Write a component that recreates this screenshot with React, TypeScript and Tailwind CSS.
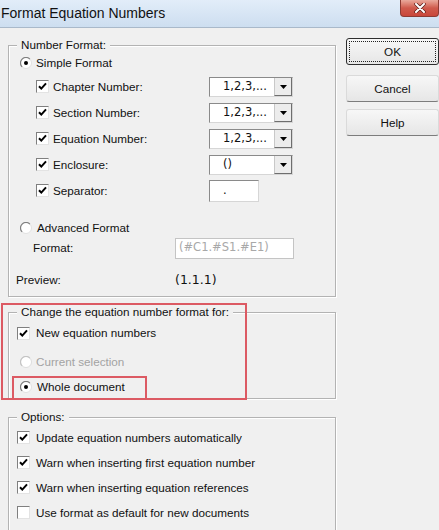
import React from "react";

const Check = ({ on = true }: { on?: boolean }) => (
  <span className="inline-flex w-[13px] h-[13px] shrink-0 bg-white border border-t-[#7f7f7f] border-l-[#7f7f7f] border-r-[#e3e3e3] border-b-[#e3e3e3] items-center justify-center">
    {on && (
      <svg width="11" height="11" viewBox="0 0 11 11">
        <path d="M2 5.2 L4.3 7.6 L9 2.4" fill="none" stroke="#000" strokeWidth="2" />
      </svg>
    )}
  </span>
);

const Radio = ({ on = false, disabled = false }: { on?: boolean; disabled?: boolean }) => (
  <svg width="12" height="12" viewBox="0 0 12 12" className="shrink-0">
    <circle cx="6" cy="6" r="5.5" fill="#fff" stroke={disabled ? "#dcdcdc" : "#e0e0e0"} />
    <path d="M9.9 2.1 A5.5 5.5 0 0 0 2.1 9.9" fill="none" stroke={disabled ? "#c4c4c4" : "#808080"} strokeWidth="1.2" />
    {on && <circle cx="6" cy="6" r="2" fill="#000" />}
  </svg>
);

const Combo = ({ value }: { value: string }) => (
  <div className="flex w-[84px] h-[20px] bg-white border border-t-[#8a8a8a] border-l-[#8a8a8a] border-r-[#d6d6d6] border-b-[#d6d6d6]">
    <div className="flex-1 flex items-center pl-[13px] font-['DejaVu_Sans',sans-serif] text-[11.5px]">{value}</div>
    <div className="w-[18px] flex items-center justify-center bg-[#ececec] border-l border-[#c8c8c8] border-r border-r-[#6e6e6e] border-b border-b-[#6e6e6e]">
      <svg width="7" height="4" viewBox="0 0 7 4">
        <path d="M0 0 H7 L3.5 4 Z" fill="#000" />
      </svg>
    </div>
  </div>
);

const Group = ({ title, className, children }: { title: string; className?: string; children: React.ReactNode }) => (
  <fieldset className={"w-[328px] border border-[#b3b3b3] shadow-[inset_1px_1px_0_#fff,1px_1px_0_#fff] " + (className || "")}>
    <legend className="ml-[8px] px-[4px] leading-[14px] bg-[#f0f0f0]">{title}</legend>
    {children}
  </fieldset>
);

const Button = ({ label, primary = false, className }: { label: string; primary?: boolean; className?: string }) => (
  <div
    className={
      "h-[27px] w-[93px] rounded-[3px] flex items-center justify-center bg-linear-to-b from-[#f7f7f7] to-[#e6e6e6] " +
      (primary
        ? "border border-[#2e2e2e] "
        : "border border-[#dadada] border-b-[#7c7c7c] ") +
      (className || "")
    }
  >
    {primary ? (
      <div className="w-[87px] h-[21px] border border-dotted border-[#222] flex items-center justify-center">{label}</div>
    ) : (
      label
    )}
  </div>
);

export default function App() {
  const checkRows = [
    { label: "Chapter Number:", value: "1,2,3,..." },
    { label: "Section Number:", value: "1,2,3,..." },
    { label: "Equation Number:", value: "1,2,3,..." },
    { label: "Enclosure:", value: "()" },
  ];

  const options = [
    { label: "Update equation numbers automatically", on: true },
    { label: "Warn when inserting first equation number", on: true },
    { label: "Warn when inserting equation references", on: true },
    { label: "Use format as default for new documents", on: false },
  ];

  return (
    <div className="relative w-[439px] h-[530px] overflow-hidden bg-[#f0f0f0] text-[#111] font-['Liberation_Sans',Arial,sans-serif] text-[11.7px]">
      {/* Title bar */}
      <div className="flex h-[28px] bg-linear-to-b from-[#e2edf9] to-[#cddef0] border-b border-[#a9b9ca]">
        <div className="flex items-center pl-[1px] text-[14px] text-[#111]">Format Equation Numbers</div>
        <div className="ml-auto w-[39px] h-[17px] rounded-b-[4px] border border-t-0 border-[#8d3b33] bg-linear-to-b from-[#e9a99c] via-[#cf5a4c] to-[#c9473a] flex items-center justify-center">
          <svg width="12" height="10" viewBox="0 0 12 10">
            <path d="M2 1 L10 9 M10 1 L2 9" stroke="#5a1e18" strokeWidth="3.4" strokeLinecap="round" />
            <path d="M2 1 L10 9 M10 1 L2 9" stroke="#fff" strokeWidth="2" strokeLinecap="round" />
          </svg>
        </div>
      </div>

      <div className="flex pl-[8px]">
        {/* Left column */}
        <div className="pt-[10px]">
          <Group title="Number Format:" className="pb-[6px]">
            <div className="flex items-center h-[22px] pl-[11px] gap-[4px]">
              <Radio on />
              <span>Simple Format</span>
            </div>
            {checkRows.map((r) => (
              <div key={r.label} className="flex items-center h-[26px] pl-[27px]">
                <div className="flex items-center gap-[4px] w-[173px]">
                  <Check />
                  <span>{r.label}</span>
                </div>
                <Combo value={r.value} />
              </div>
            ))}
            <div className="flex items-center h-[26px] pl-[27px]">
              <div className="flex items-center gap-[4px] w-[173px]">
                <Check />
                <span>Separator:</span>
              </div>
              <div className="w-[50px] h-[22px] bg-white border border-t-[#8a8a8a] border-l-[#8a8a8a] border-r-[#d6d6d6] border-b-[#d6d6d6] flex items-center pl-[13px] font-['DejaVu_Sans',sans-serif] text-[11.5px]">
                .
              </div>
            </div>
            <div className="flex items-center h-[20px] mt-[14px] pl-[11px] gap-[5px]">
              <Radio />
              <span>Advanced Format</span>
            </div>
            <div className="flex items-center h-[20px] pl-[24px]">
              <span className="w-[142px]">Format:</span>
              <div className="w-[119px] h-[21px] bg-white border border-[#c4c4c4] flex items-center pl-[3px] text-[#a8a8a8] font-['DejaVu_Sans',sans-serif] text-[11.5px]">
                (#C1.#S1.#E1)
              </div>
            </div>
            <div className="flex items-center h-[20px] mt-[12px] pl-[7px]">
              <span className="w-[159px]">Preview:</span>
              <span className="font-['DejaVu_Sans',sans-serif] text-[12.5px]">(1.1.1)</span>
            </div>
          </Group>

          <Group title="Change the equation number format for:" className="mt-[8px]">
            <div className="flex items-center h-[22px] mt-[3px] pl-[8px] gap-[6px]">
              <Check />
              <span>New equation numbers</span>
            </div>
            <div className="flex items-center h-[22px] mt-[7px] pl-[11px] gap-[4px] text-[#a3a3a3]">
              <Radio disabled />
              <span>Current selection</span>
            </div>
            <div className="flex items-center h-[22px] mt-[3px] pl-[11px] gap-[5px]">
              <Radio on />
              <span>Whole document</span>
            </div>
          </Group>

          <Group title="Options:" className="mt-[11px] pt-[1px] pb-[24px]">
            {options.map((o) => (
              <div key={o.label} className="flex items-center h-[25px] pl-[8px] gap-[6px]">
                <Check on={o.on} />
                <span>{o.label}</span>
              </div>
            ))}
          </Group>
        </div>

        {/* Right column */}
        <div className="ml-[10px] pt-[10px] flex flex-col">
          <Button label="OK" primary />
          <Button label="Cancel" className="mt-[10px]" />
          <Button label="Help" className="mt-[7px]" />
        </div>
      </div>

      {/* Red annotation boxes */}
      <div className="absolute left-[1px] top-[303px] w-[246px] h-[97px] border-2 border-[#dc5a63] pointer-events-none" />
      <div className="absolute left-[12px] top-[376px] w-[135px] h-[24px] border-2 border-[#dc5a63] pointer-events-none" />
    </div>
  );
}
